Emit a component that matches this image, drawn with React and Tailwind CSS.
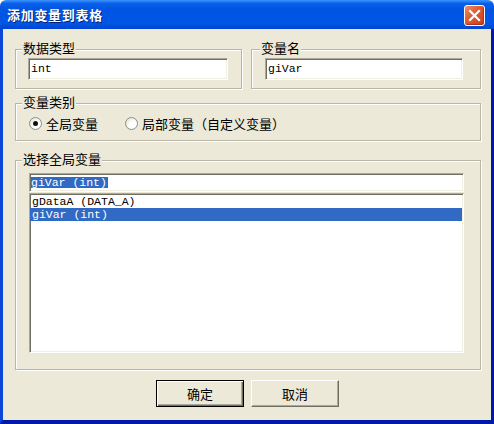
const sunken =
  'border border-t-[#aca899] border-l-[#aca899] border-r-white border-b-white shadow-[inset_1px_1px_0_#716f64,inset_-1px_-1px_0_#f1efe2] bg-white';
const group =
  'border border-[#b9b6a7] shadow-[inset_1px_1px_0_#fff,1px_1px_0_#fff]';
const legend = 'block w-fit -mt-[9px] px-[1px] bg-[#ece9d8] leading-[13px]';
const mono = "font-['Liberation_Mono',monospace] text-[11.5px]";

function Radio({ checked, label, className = '' }) {
  return (
    <div className={`flex items-center gap-[4px] ${className}`}>
      <span className="w-[13px] h-[13px] rounded-full border border-[#8f8f88] bg-[radial-gradient(circle_at_65%_65%,#ffffff_35%,#d8d7cc_100%)] flex items-center justify-center">
        {checked && <span className="w-[5px] h-[5px] rounded-full bg-[#111]" />}
      </span>
      <span className="leading-[13px]">{label}</span>
    </div>
  );
}

function CloseButton() {
  return (
    <div className="mt-[2px] w-[21px] h-[21px] rounded-[3px] border border-white bg-[linear-gradient(135deg,#f28c66_0%,#e05a30_45%,#c9401d_100%)] flex items-center justify-center shadow-[inset_-1px_-1px_1px_#a93215]">
      <svg width="13" height="13" viewBox="0 0 13 13">
        <path d="M2 2 L11 11 M11 2 L2 11" stroke="#fff" strokeWidth="2.2" strokeLinecap="square" />
      </svg>
    </div>
  );
}

export default function App() {
  return (
    <div className="w-[494px] h-[424px] flex flex-col text-[13px] text-black font-['Noto_Sans_CJK_SC',sans-serif]">
      {/* 标题栏 */}
      <div className="h-[29px] shrink-0 flex items-center justify-between pl-[7px] pr-[9px] rounded-t-[6px] bg-[linear-gradient(180deg,#3d95ff_0%,#0a5fea_12%,#0054e3_35%,#0056e6_80%,#0044cf_100%)]">
        <span className="text-white font-bold text-[13px] tracking-[0.7px] [text-shadow:1px_1px_0_#0a1f6e]">
          添加变量到表格
        </span>
        <CloseButton />
      </div>

      <div className="flex-1 flex flex-col bg-[#ece9d8] border-l-[3px] border-r-[3px] border-b-[4px] border-l-[#0a46d8] border-r-[#0019a8] border-b-[#0019a8] pt-[20px] pl-[12px] pr-[10px]">
        <div className="flex gap-[9px]">
          <div className={`w-[227px] pb-[8px] ${group}`}>
            <span className={`ml-[6px] ${legend}`}>数据类型</span>
            <div className={`mt-[4px] ml-[12px] w-[200px] h-[22px] flex items-center pl-[2px] ${mono} ${sunken}`}>
              int
            </div>
          </div>
          <div className={`w-[230px] pb-[8px] ${group}`}>
            <span className={`ml-[8px] ${legend}`}>变量名</span>
            <div className={`mt-[4px] ml-[13px] w-[198px] h-[22px] flex items-center pl-[2px] ${mono} ${sunken}`}>
              giVar
            </div>
          </div>
        </div>

        <div className={`mt-[14px] w-[466px] pb-[10px] ${group}`}>
          <span className={`ml-[6px] ${legend}`}>变量类别</span>
          <div className="mt-[9px] pl-[13px] flex">
            <Radio checked label="全局变量" />
            <Radio label="局部变量（自定义变量）" className="ml-[27px]" />
          </div>
        </div>

        <div className={`mt-[19px] w-[466px] pb-[16px] ${group}`}>
          <span className={`ml-[6px] ${legend}`}>选择全局变量</span>
          <div className={`mt-[8px] ml-[13px] w-[435px] h-[19px] flex items-center pl-[1px] ${mono} ${sunken}`}>
            <span className="bg-[#316ac5] text-white leading-[11px] h-[11px] pr-[1px]">giVar (int)</span>
          </div>
          <div className={`mt-[1px] ml-[13px] w-[435px] h-[160px] pt-[1px] ${mono} ${sunken}`}>
            <div className="h-[13px] leading-[13px] pl-[2px]">gDataA (DATA_A)</div>
            <div className="h-[13px] leading-[13px] pl-[2px] mr-[1px] ml-[0px] bg-[#316ac5] text-white">giVar (int)</div>
          </div>
        </div>

        <div className="mt-[10px] flex justify-center gap-[7px] pr-[1px]">
          <button className="w-[88px] h-[27px] border border-black bg-[#ece9d8] shadow-[inset_1px_1px_0_#fff,inset_-1px_-1px_0_#716f64,inset_-2px_-2px_0_#aca899] leading-[13px]">
            确定
          </button>
          <button className="w-[88px] h-[27px] border border-t-white border-l-white border-r-[#716f64] border-b-[#716f64] bg-[#ece9d8] shadow-[inset_-1px_-1px_0_#aca899] leading-[13px]">
            取消
          </button>
        </div>
      </div>
    </div>
  );
}
